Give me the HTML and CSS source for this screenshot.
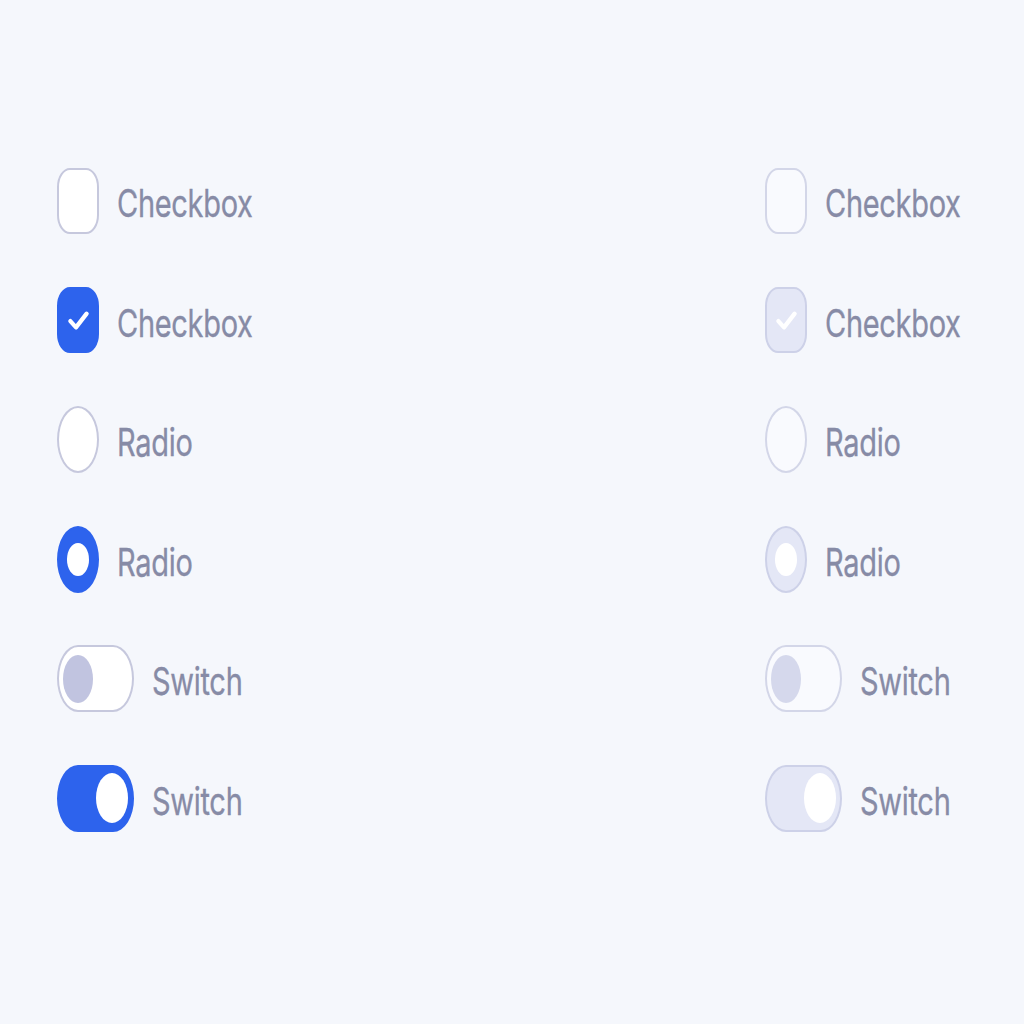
FILE: index.html
```html
<!DOCTYPE html>
<html lang="en">
<head>
<meta charset="utf-8">
<title>Controls</title>
<link rel="stylesheet" href="styles.css">
</head>
<body>
<main class="board">
  <section class="col">
    <div class="row"><span class="box"></span><span class="label">Checkbox</span></div>
    <div class="row"><span class="box on"><svg class="tick" viewBox="0 0 20 20"><path d="M3.5 10.5 L8 15.5 L16.5 4.5"/></svg></span><span class="label">Checkbox</span></div>
    <div class="row"><span class="radio"></span><span class="label">Radio</span></div>
    <div class="row"><span class="radio on"></span><span class="label">Radio</span></div>
    <div class="row"><span class="switch"><span class="knob"></span></span><span class="label">Switch</span></div>
    <div class="row"><span class="switch on"><span class="knob"></span></span><span class="label">Switch</span></div>
  </section>
  <section class="col disabled">
    <div class="row"><span class="box"></span><span class="label">Checkbox</span></div>
    <div class="row"><span class="box on"><svg class="tick" viewBox="0 0 20 20"><path d="M3.5 10.5 L8 15.5 L16.5 4.5"/></svg></span><span class="label">Checkbox</span></div>
    <div class="row"><span class="radio"></span><span class="label">Radio</span></div>
    <div class="row"><span class="radio on"></span><span class="label">Radio</span></div>
    <div class="row"><span class="switch"><span class="knob"></span></span><span class="label">Switch</span></div>
    <div class="row"><span class="switch on"><span class="knob"></span></span><span class="label">Switch</span></div>
  </section>
</main>
</body>
</html>
```
FILE: styles.css
```css
html, body {
  margin: 0;
  padding: 0;
  background: #f5f7fc;
  width: 1024px;
  height: 1024px;
  overflow: hidden;
}
.board {
  display: grid;
  grid-template-columns: 708px auto;
  padding: 167px 0 0 57px;
  font-family: Inter, "Noto Sans", sans-serif;
}
.col {
  display: flex;
  flex-direction: column;
  gap: 52.5px;
}
.row {
  display: flex;
  align-items: center;
  height: 67px;
  gap: 18px;
}
.label {
  display: inline-block;
  font-size: 29px;
  color: #878ba6;
  letter-spacing: -0.3px;
  transform: translateY(2px) scaleY(1.34);
  line-height: 1;
  -webkit-text-stroke: 0.25px #878ba6;
}
.box {
  box-sizing: border-box;
  width: 42px;
  height: 66px;
  border: 2px solid #c6c8dd;
  border-radius: 13px / 19px;
  background: #ffffff;
  display: flex;
  align-items: center;
  justify-content: center;
}
.box.on {
  background: #2d63ed;
  border-color: #2d63ed;
}
.tick {
  width: 25px;
  height: 25px;
  fill: none;
  stroke: #ffffff;
  stroke-width: 3.4;
  stroke-linecap: round;
  stroke-linejoin: round;
}
.radio {
  box-sizing: border-box;
  width: 42px;
  height: 67px;
  border: 2px solid #c6c8dd;
  border-radius: 50%;
  background: #ffffff;
  display: flex;
  align-items: center;
  justify-content: center;
}
.radio.on {
  background: #2d63ed;
  border-color: #2d63ed;
}
.radio.on::after {
  content: "";
  width: 22px;
  height: 33px;
  border-radius: 50%;
  background: #ffffff;
}
.switch {
  box-sizing: border-box;
  width: 77px;
  height: 67px;
  border: 2px solid #c6c8dd;
  border-radius: 21px / 33.5px;
  background: #ffffff;
  display: flex;
  align-items: center;
  padding: 0 4px;
}
.knob {
  width: 30px;
  height: 48px;
  border-radius: 50%;
  background: #c1c4e0;
}
.switch.on {
  background: #2d63ed;
  border-color: #2d63ed;
  justify-content: flex-end;
}
.switch.on .knob {
  width: 32px;
  height: 50px;
  background: #ffffff;
}

/* disabled column */
.disabled .box,
.disabled .radio,
.disabled .switch {
  border-color: #d3d6e8;
  background: #f9fafe;
}
.disabled .box.on,
.disabled .radio.on,
.disabled .switch.on {
  background: #e4e7f6;
  border-color: #cdd1e8;
}
.disabled .knob {
  background: #d5d8ec;
}
.disabled .switch.on .knob {
  background: #ffffff;
}
```
